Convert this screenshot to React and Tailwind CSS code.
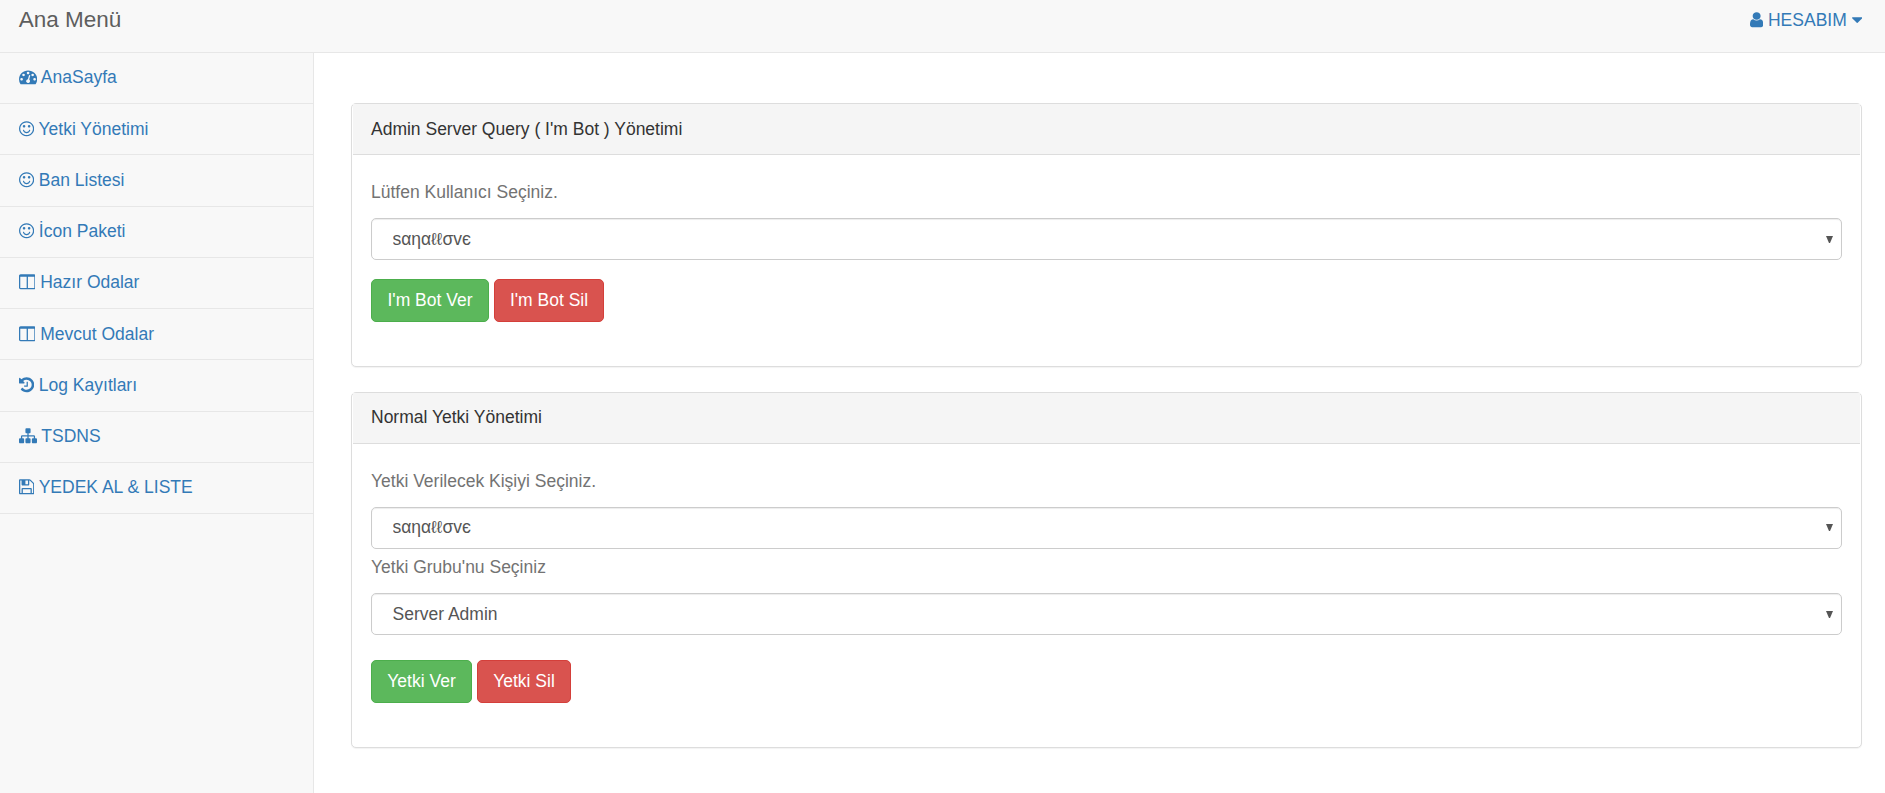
import { clsx } from 'clsx';

// Font Awesome 4 glyphs: x offset and advance inside the 1792 unit em
const ICONS = {
  dashboard: {
    box: '0 0 1792 1792',
    width: 18.2,
    d: 'M384 1152q0-53-37.5-90.5t-90.5-37.5-90.5 37.5-37.5 90.5 37.5 90.5 90.5 37.5 90.5-37.5 37.5-90.5zm192-448q0-53-37.5-90.5t-90.5-37.5-90.5 37.5-37.5 90.5 37.5 90.5 90.5 37.5 90.5-37.5 37.5-90.5zm428 481l101-382q6-26-7.5-48.5t-38.5-29.5-48 6.5-30 39.5l-101 382q-60 5-107 43.5t-63 98.5q-20 77 20 146t117 89 146-20 89-117q16-60-6-117t-72-91zm660-33q0-53-37.5-90.5t-90.5-37.5-90.5 37.5-37.5 90.5 37.5 90.5 90.5 37.5 90.5-37.5 37.5-90.5zm-640-640q0-53-37.5-90.5t-90.5-37.5-90.5 37.5-37.5 90.5 37.5 90.5 90.5 37.5 90.5-37.5 37.5-90.5zm448 192q0-53-37.5-90.5t-90.5-37.5-90.5 37.5-37.5 90.5 37.5 90.5 90.5 37.5 90.5-37.5 37.5-90.5zm320 448q0 261-141 483-19 29-54 29h-1402q-35 0-54-29-141-221-141-483 0-182 71-348t191-286 286-191 348-71 348 71 286 191 191 286 71 348z',
  },
  smile: {
    box: '128 0 1536 1792',
    width: 15.2,
    d: 'M1262 1075q-37 121-138 195t-228 74-228-74-138-195q-8-25 4-48.5t38-31.5q25-8 48.5 4t31.5 38q25 80 92.5 129.5t151.5 49.5 151.5-49.5 92.5-129.5q8-26 32-38t49-4 37 31.5 4 48.5zm-494-435q0 53-37.5 90.5t-90.5 37.5-90.5-37.5-37.5-90.5 37.5-90.5 90.5-37.5 90.5 37.5 37.5 90.5zm512 0q0 53-37.5 90.5t-90.5 37.5-90.5-37.5-37.5-90.5 37.5-90.5 90.5-37.5 90.5 37.5 37.5 90.5zm256 256q0-130-51-248.5t-136.5-204-204-136.5-248.5-51-248.5 51-204 136.5-136.5 204-51 248.5 51 248.5 136.5 204 204 136.5 248.5 51 248.5-51 204-136.5 136.5-204 51-248.5zm128 0q0 209-103 385.5t-279.5 279.5-385.5 103-385.5-103-279.5-279.5-103-385.5 103-385.5 279.5-279.5 385.5-103 385.5 103 279.5 279.5 103 385.5z',
  },
  columns: {
    box: '64 0 1664 1792',
    width: 16.6,
    d: 'M224 1536h608v-1152h-640v1120q0 13 9.5 22.5t22.5 9.5zm1376-32v-1120h-640v1152h608q13 0 22.5-9.5t9.5-22.5zm128-1216v1216q0 66-47 113t-113 47h-1344q-66 0-113-47t-47-113v-1216q0-66 47-113t113-47h1344q66 0 113 47t47 113z',
  },
  history: {
    box: '128 0 1536 1792',
    width: 15.2,
    d: 'M1664 896q0 156-61 298t-164 245-245 164-298 61q-172 0-327-72.5t-264-204.5q-7-10-6.5-22.5t8.5-20.5l137-138q10-9 25-9 16 2 23 12 73 95 179 147t225 52q104 0 198.5-40.5t163.5-109.5 109.5-163.5 40.5-198.5-40.5-198.5-109.5-163.5-163.5-109.5-198.5-40.5q-98 0-188 35.5t-160 101.5l137 138q31 30 14 69-17 40-59 40h-448q-26 0-45-19t-19-45v-448q0-42 40-59 39-17 69 14l130 129q107-101 244.5-156.5t284.5-55.5q156 0 298 61t245 164 164 245 61 298zm-640-288v448q0 14-9 23t-23 9h-320q-14 0-23-9t-9-23v-64q0-14 9-23t23-9h224v-352q0-14 9-23t23-9h64q14 0 23 9t9 23z',
  },
  sitemap: {
    box: '0 0 1792 1792',
    width: 18,
    d: 'M1792 1248v320q0 40-28 68t-68 28h-320q-40 0-68-28t-28-68v-320q0-40 28-68t68-28h96v-192h-512v192h96q40 0 68 28t28 68v320q0 40-28 68t-68 28h-320q-40 0-68-28t-28-68v-320q0-40 28-68t68-28h96v-192h-512v192h96q40 0 68 28t28 68v320q0 40-28 68t-68 28h-320q-40 0-68-28t-28-68v-320q0-40 28-68t68-28h96v-192q0-52 38-90t90-38h512v-192h-96q-40 0-68-28t-28-68v-320q0-40 28-68t68-28h320q40 0 68 28t28 68v320q0 40-28 68t-68 28h-96v192h512q52 0 90 38t38 90v192h96q40 0 68 28t28 68z',
  },
  save: {
    box: '128 0 1536 1792',
    width: 15.4,
    d: 'M512 1536h768v-384h-768v384zm896 0h128v-896q0-14-10-38.5t-20-34.5l-281-281q-10-10-34-20t-39-10v416q0 40-28 68t-68 28h-576q-40 0-68-28t-28-68v-416h-128v1280h128v-416q0-40 28-68t68-28h832q40 0 68 28t28 68v416zm-384-928v-320q0-13-9.5-22.5t-22.5-9.5h-192q-13 0-22.5 9.5t-9.5 22.5v320q0 13 9.5 22.5t22.5 9.5h192q13 0 22.5-9.5t9.5-22.5zm640 32v928q0 40-28 68t-68 28h-1344q-40 0-68-28t-28-68v-1344q0-40 28-68t68-28h928q40 0 88 20t76 48l280 280q28 28 48 76t20 88z',
  },
  user: {
    box: '256 0 1280 1792',
    width: 13.3,
    d: 'M1536 1399q0 109-62.5 187t-150.5 78h-854q-88 0-150.5-78t-62.5-187q0-85 8.5-160.5t31.5-152 58.5-131 94-89 134.5-34.5q131 128 313 128t313-128q76 0 134.5 34.5t94 89 58.5 131 31.5 152 8.5 160.5zm-256-887q0 159-112.5 271.5t-271.5 112.5-271.5-112.5-112.5-271.5 112.5-271.5 271.5-112.5 271.5 112.5 112.5 271.5z',
  },
  caret: {
    box: '384 0 1024 1792',
    width: 10.4,
    d: 'M1408 704q0 26-19 45l-448 448q-19 19-45 19t-45-19l-448-448q-19-19-19-45t19-45 45-19h896q26 0 45 19t19 45z',
  },
};

const MENU = [
  { icon: 'dashboard', label: 'AnaSayfa' },
  { icon: 'smile', label: 'Yetki Yönetimi' },
  { icon: 'smile', label: 'Ban Listesi' },
  { icon: 'smile', label: 'İcon Paketi' },
  { icon: 'columns', label: 'Hazır Odalar' },
  { icon: 'columns', label: 'Mevcut Odalar' },
  { icon: 'history', label: 'Log Kayıtları' },
  { icon: 'sitemap', label: 'TSDNS' },
  { icon: 'save', label: 'YEDEK AL & LISTE' },
];

function Icon({ name }) {
  const { box, width, d } = ICONS[name];
  return (
    <svg
      viewBox={box}
      width={width}
      height={17.5}
      preserveAspectRatio="none"
      fill="currentColor"
      className="inline-block align-[-2.5px]"
    >
      <path d={d} />
    </svg>
  );
}

function Panel({ title, className, headingClassName, children }) {
  return (
    <section className={clsx('rounded-[5px] border border-[#ddd] bg-white shadow-[0_1px_1px_rgba(0,0,0,0.05)]', className)}>
      <h2 className={clsx('mx-px h-[51px] border-b border-[#ddd] bg-[#f5f5f5] px-[18px] text-[#333]', headingClassName)}>
        {title}
      </h2>
      <div className="px-[19px]">{children}</div>
    </section>
  );
}

function SelectBox({ options, className }) {
  return (
    <div
      className={clsx(
        'flex h-[42px] items-center rounded-[5px] border border-[#ccc] bg-white pr-2 pl-[20.5px] text-[#555] shadow-[inset_0_1px_1px_rgba(0,0,0,0.075)]',
        className,
      )}
    >
      <select className="flex-1 appearance-none outline-none">
        {options.map((option) => (
          <option key={option}>{option}</option>
        ))}
      </select>
      <svg viewBox="0 0 7 7" className="h-[7px] w-[7px]" fill="currentColor">
        <path d="M0 0h7L4 7H3z" />
      </svg>
    </div>
  );
}

function Button({ variant, className, children }) {
  return (
    <button
      className={clsx(
        'h-[43px] rounded-[5px] border text-center whitespace-nowrap text-white',
        variant === 'success' ? 'border-[#4cae4c] bg-[#5cb85c]' : 'border-[#d43f3a] bg-[#d9534f]',
        className,
      )}
    >
      {children}
    </button>
  );
}

export default function App() {
  return (
    <div className="flex h-screen flex-col overflow-hidden bg-white font-['Liberation_Sans',Arial,sans-serif] text-[17.5px] leading-[25px] text-[#333]">
      <header className="flex h-[53px] shrink-0 justify-between border-b border-[#e7e7e7] bg-[#f8f8f8] pr-[23px] pl-[18.75px]">
        <a href="#" className="pt-[7px] text-[22.5px] text-[#5e5e5e]">Ana Menü</a>
        <a href="#" className="pt-2 text-[#337ab7]">
          <Icon name="user" /> HESABIM <Icon name="caret" />
        </a>
      </header>

      <div className="flex min-h-0 flex-1">
        <nav className="w-[314px] shrink-0 border-r border-[#e7e7e7] bg-[#f8f8f8]">
          <ul>
            {MENU.map((item) => (
              <li key={item.label} className="h-[51.22px] border-b border-[#e7e7e7]">
                <a href="#" className="block py-[12.45px] pl-[18.75px] text-[#337ab7]">
                  <Icon name={item.icon} /> {item.label}
                </a>
              </li>
            ))}
          </ul>
        </nav>

        <main className="flex flex-1 flex-col gap-[25px] pt-[50px] pr-[23px] pl-[37px]">
          <Panel title="Admin Server Query ( I'm Bot ) Yönetimi" className="h-[264px]" headingClassName="pt-[13px]">
            <p className="pt-[25px] text-[#737373]">Lütfen Kullanıcı Seçiniz.</p>
            <SelectBox options={['sαηαℓℓσvє']} className="mt-[13px]" />
            <div className="mt-[19px] flex gap-[5px]">
              <Button variant="success" className="w-[118px]">I'm Bot Ver</Button>
              <Button variant="danger" className="w-[110px]">I'm Bot Sil</Button>
            </div>
          </Panel>

          <Panel title="Normal Yetki Yönetimi" className="h-[356px]" headingClassName="pt-3">
            <p className="pt-[25px] text-[#737373]">Yetki Verilecek Kişiyi Seçiniz.</p>
            <SelectBox options={['sαηαℓℓσvє']} className="mt-[13px] pb-px" />
            <p className="pt-[6px] text-[#737373]">Yetki Grubu'nu Seçiniz</p>
            <SelectBox options={['Server Admin']} className="mt-[13px]" />
            <div className="mt-[25px] flex gap-[5px]">
              <Button variant="success" className="w-[101px]">Yetki Ver</Button>
              <Button variant="danger" className="w-[94px]">Yetki Sil</Button>
            </div>
          </Panel>
        </main>
      </div>
    </div>
  );
}
